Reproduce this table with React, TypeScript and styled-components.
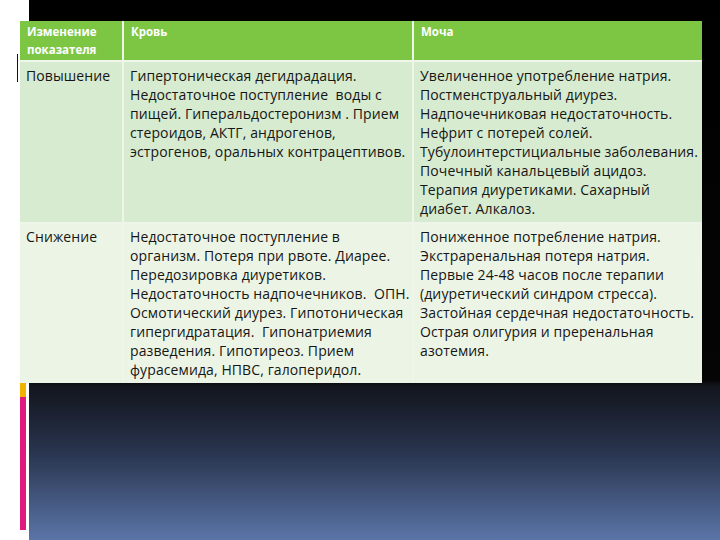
import React from "react";
import styled, { createGlobalStyle } from "styled-components";

const Global = createGlobalStyle`
  html, body { margin: 0; padding: 0; background: #000; }
  body { width: 720px; height: 540px; overflow: hidden; }
`;

const Slide = styled.div`
  position: relative;
  width: 720px;
  height: 540px;
  box-sizing: border-box;
  padding: 21px 18px 0 20px;
  display: flex;
  flex-direction: column;
  background:
    linear-gradient(to right, #ffffff 0, #ffffff 29px, transparent 29px),
    linear-gradient(
      to bottom,
      #000 0,
      #050505 380px,
      #13161d 386px,
      #1c2232 415px,
      #28334c 450px,
      #3e5074 490px,
      #5b75a8 540px
    );
  font-family: "Open Sans", "Noto Sans", sans-serif;
`;

const Tick = styled.div`
  position: absolute;
  left: 17px;
  top: 54px;
  width: 1px;
  height: 28px;
  background: #111;
`;

const Table = styled.div`
  display: grid;
  grid-template-columns: 102px 288px 1fr;
  column-gap: 2px;
  row-gap: 2px;
  background: #eef6ea;
`;

const HeadCell = styled.div`
  background: #7cc644;
  color: #ffffff;
  font-weight: 700;
  font-size: 11.5px;
  line-height: 18px;
  height: 39px;
  box-sizing: border-box;
  padding: 2px 6px 0 7px;
  white-space: nowrap;
`;

const Cell = styled.div<{ $tone: "dark" | "light" }>`
  background: ${(p) => (p.$tone === "dark" ? "#d6ebcf" : "#ecf5e5")};
  color: #161616;
  font-size: 14px;
  letter-spacing: 0.1px;
  line-height: 19px;
  padding: ${(p) => (p.$tone === "dark" ? "4px 2px 4px 6px" : "3px 2px 4px 6px")};
  white-space: pre;
  overflow: hidden;
`;

const Accent = styled.div`
  width: 6px;
  height: 147px;
  background: linear-gradient(to bottom, #f0b400 0, #f0b400 14px, #e0197e 14px, #e0197e 100%);
`;

const rows: { label: string; blood: string[]; urine: string[]; tone: "dark" | "light" }[] = [
  {
    label: "Повышение",
    tone: "dark",
    blood: [
      "Гипертоническая дегидрадация.",
      "Недостаточное поступление  воды с",
      "пищей. Гиперальдостеронизм . Прием",
      "стероидов, АКТГ, андрогенов,",
      "эстрогенов, оральных контрацептивов.",
    ],
    urine: [
      "Увеличенное употребление натрия.",
      "Постменструальный диурез.",
      "Надпочечниковая недостаточность.",
      "Нефрит с потерей солей.",
      "Тубулоинтерстициальные заболевания.",
      "Почечный канальцевый ацидоз.",
      "Терапия диуретиками. Сахарный",
      "диабет. Алкалоз.",
    ],
  },
  {
    label: "Снижение",
    tone: "light",
    blood: [
      "Недостаточное поступление в",
      "организм. Потеря при рвоте. Диарее.",
      "Передозировка диуретиков.",
      "Недостаточность надпочечников.  ОПН.",
      "Осмотический диурез. Гипотоническая",
      "гипергидратация.  Гипонатриемия",
      "разведения. Гипотиреоз. Прием",
      "фурасемида, НПВС, галоперидол.",
    ],
    urine: [
      "Пониженное потребление натрия.",
      "Экстраренальная потеря натрия.",
      "Первые 24-48 часов после терапии",
      "(диуретический синдром стресса).",
      "Застойная сердечная недостаточность.",
      "Острая олигурия и преренальная",
      "азотемия.",
    ],
  },
];

export default function App() {
  return (
    <>
      <Global />
      <Slide>
        <Tick />
        <Table>
          <HeadCell>
            Изменение
            <br />
            показателя
          </HeadCell>
          <HeadCell>Кровь</HeadCell>
          <HeadCell>Моча</HeadCell>
          {rows.map((r) => (
            <React.Fragment key={r.label}>
              <Cell $tone={r.tone}>{r.label}</Cell>
              <Cell $tone={r.tone}>{r.blood.join("\n")}</Cell>
              <Cell $tone={r.tone}>{r.urine.join("\n")}</Cell>
            </React.Fragment>
          ))}
        </Table>
        <Accent />
      </Slide>
    </>
  );
}
